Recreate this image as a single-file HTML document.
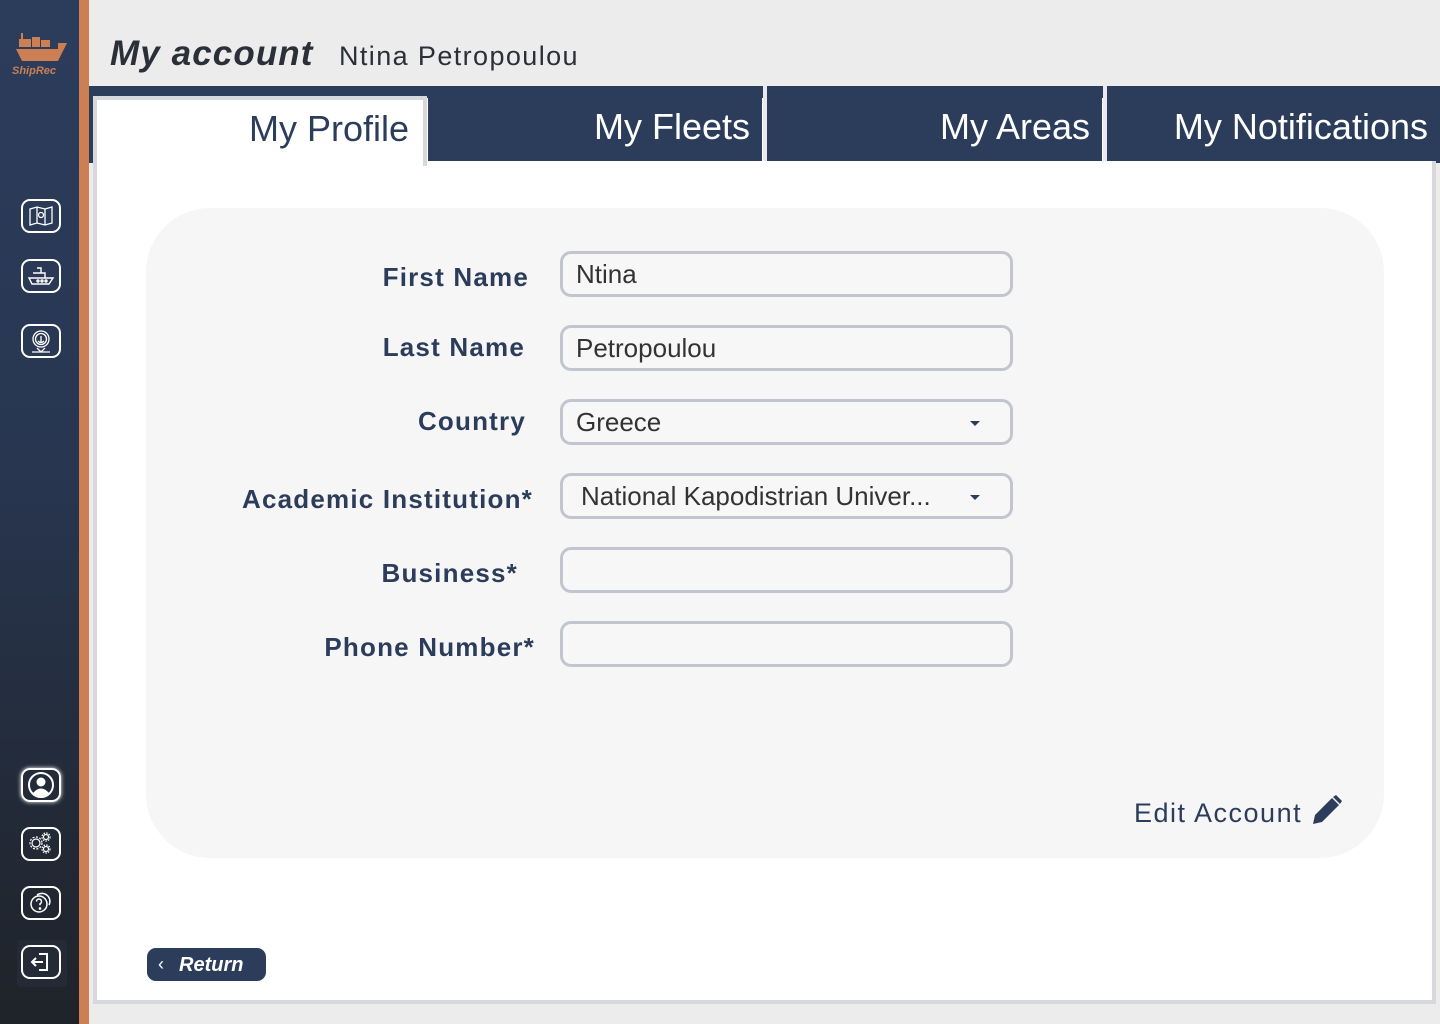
<!DOCTYPE html>
<html><head><meta charset="utf-8"><style>
*{margin:0;padding:0;box-sizing:border-box}
body{width:1440px;height:1024px;overflow:hidden;background:#ececec;font-family:"Liberation Sans",sans-serif;position:relative}
.side{position:absolute;left:0;top:0;width:79px;height:1024px;background:linear-gradient(#2c3d5c 0%,#283650 45%,#1f2329 100%)}
.strip{position:absolute;left:79px;top:0;width:10px;height:1024px;background:#cb7f52}
.ico{position:absolute;left:21px;width:40px;height:34px;border:2.5px solid #fff;border-radius:9px;display:flex;align-items:center;justify-content:center}
.title{position:absolute;left:110px;top:34px;font-size:35px;font-weight:bold;font-style:italic;color:#2b2f38;letter-spacing:1.1px}
.name{position:absolute;left:339px;top:41px;font-size:27px;color:#2b2f38;letter-spacing:1.4px}
.bar{position:absolute;left:89px;top:86px;width:1351px;height:77px;background:#2c3d5c}
.panel{position:absolute;left:93px;top:98px;width:1343px;height:906px;background:#fff;border:4px solid #d6d8de;border-top:none}
.tab{position:absolute;top:86px;height:75px;background:#2c3d5c;color:#fff;font-size:36px;text-align:right;padding-right:12px;line-height:82px}
.tab.act{top:96px;left:93px;width:334px;height:70px;background:#fff;color:#2c3d5c;border:4px solid #d6d8de;border-bottom:none;line-height:58px;padding-right:14px}
.sep{position:absolute;top:86px;width:4px;height:75px;background:#e8e8ee}
.card{position:absolute;left:146px;top:208px;width:1238px;height:650px;background:#f6f6f6;border-radius:64px}
.lbl{position:absolute;font-size:26px;color:#2c3d5c;font-weight:bold;letter-spacing:1.2px}
.inp{position:absolute;left:560px;width:453px;height:46px;border:3px solid #c2c5cd;border-radius:11px;font-size:26px;color:#333;padding-left:13px;line-height:40px;background:#f7f7f7}
.caret{position:absolute;right:30px;top:19px;width:0;height:0;border-left:5px solid transparent;border-right:5px solid transparent;border-top:5px solid #2c3d5c}
.edit{position:absolute;left:1134px;top:798px;font-size:27px;color:#2c3d5c;letter-spacing:1.5px}
.ret{position:absolute;left:147px;top:948px;width:119px;height:33px;background:#2c3d5c;border-radius:9px;color:#fff;font-size:20px;font-weight:bold;font-style:italic;line-height:34px;padding-left:32px}
</style></head><body>
<div class="side">
  <svg style="position:absolute;left:12px;top:28px" width="58" height="50" viewBox="0 0 58 50">
    <g fill="#cb7f52">
      <rect x="9" y="5" width="2" height="6"/><rect x="7" y="11" width="12" height="8"/><rect x="20" y="9" width="8" height="10"/><rect x="29" y="12" width="9" height="7"/>
      <path d="M4 21h48l-6 12H10z"/><path d="M46 15h9l-3 6h-6z"/>
      <text x="0" y="46" font-family="Liberation Sans" font-weight="bold" font-style="italic" font-size="11">ShipRec</text>
    </g>
  </svg>
  <div class="ico" style="top:199px"><svg width="26" height="22" viewBox="0 0 26 22" fill="none" stroke="#fff" stroke-width="1.3"><path d="M2 4l7-2 8 2 7-2v16l-7 2-8-2-7 2z M9 2v16 M17 4v16"/><circle cx="13" cy="10" r="2.5"/></svg></div>
  <div class="ico" style="top:259px"><svg width="28" height="22" viewBox="0 0 28 22" fill="none" stroke="#fff" stroke-width="1.4"><path d="M10 3h4v5 M6 8h12v5 M2 13h24l-4 6H5z"/><circle cx="11" cy="16" r="1"/><circle cx="15" cy="16" r="1"/><circle cx="19" cy="16" r="1"/></svg></div>
  <div class="ico" style="top:324px"><svg width="24" height="26" viewBox="0 0 24 26" fill="none" stroke="#fff" stroke-width="1.3"><circle cx="12" cy="11" r="8"/><circle cx="12" cy="11" r="5.5"/><path d="M12 8v7 M9 13q3 3 6 0 M8 20l4 4 4-4 M3 24h18"/></svg></div>
  <div class="ico" style="top:768px;box-shadow:0 0 4px #fff"><svg width="28" height="28" viewBox="0 0 28 28"><circle cx="14" cy="14" r="12" fill="none" stroke="#fff" stroke-width="2"/><circle cx="14" cy="11" r="4.5" fill="#fff"/><path d="M6 22q8-9 16 0q-8 6-16 0z" fill="#fff"/></svg></div>
  <div class="ico" style="top:827px"><svg width="28" height="26" viewBox="0 0 28 26" fill="none" stroke="#fff" stroke-width="1.2"><circle cx="9" cy="12" r="4"/><circle cx="9" cy="12" r="6" stroke-dasharray="2 1.5"/><circle cx="19" cy="6" r="2.5"/><circle cx="19" cy="6" r="4" stroke-dasharray="1.5 1.2"/><circle cx="19" cy="18" r="2.5"/><circle cx="19" cy="18" r="4" stroke-dasharray="1.5 1.2"/></svg></div>
  <div class="ico" style="top:886px"><svg width="28" height="26" viewBox="0 0 28 26" fill="none" stroke="#fff" stroke-width="1.5"><circle cx="12" cy="14" r="8"/><path d="M10 5a8 8 0 0 1 12 10"/><path d="M9.5 11.5a2.5 2.5 0 1 1 3.5 2.3v1.5"/><circle cx="13" cy="18.5" r=".6" fill="#fff"/></svg></div>
  <div style="position:absolute;left:17px;top:940px;width:50px;height:47px;background:#252b36;border-radius:4px"></div>
  <div class="ico" style="top:945px"><svg width="24" height="22" viewBox="0 0 24 22" fill="none" stroke="#fff" stroke-width="2"><path d="M10 3h8v16h-8 M14 11H3 M7 7l-4 4 4 4"/></svg></div>
</div>
<div class="strip"></div>
<div class="title">My account</div>
<div class="name">Ntina Petropoulou</div>
<div class="bar"></div>
<div class="panel"></div>
<div class="tab act">My Profile</div>
<div class="tab" style="left:428px;width:334px">My Fleets</div>
<div class="sep" style="left:763px"></div>
<div class="tab" style="left:767px;width:335px">My Areas</div>
<div class="sep" style="left:1103px"></div>
<div class="tab" style="left:1107px;width:333px">My Notifications</div>
<div class="card"></div>
<div class="lbl" style="right:911px;top:262px">First Name</div>
<div class="lbl" style="right:915px;top:332px">Last Name</div>
<div class="lbl" style="right:914px;top:406px">Country</div>
<div class="lbl" style="right:907px;top:484px">Academic Institution*</div>
<div class="lbl" style="right:922px;top:558px">Business*</div>
<div class="lbl" style="right:905px;top:632px">Phone Number*</div>
<div class="inp" style="top:251px">Ntina</div>
<div class="inp" style="top:325px">Petropoulou</div>
<div class="inp" style="top:399px">Greece<span class="caret"></span></div>
<div class="inp" style="top:473px;padding-left:18px">National Kapodistrian Univer...<span class="caret"></span></div>
<div class="inp" style="top:547px"></div>
<div class="inp" style="top:621px"></div>
<div class="edit">Edit Account</div>
<svg style="position:absolute;left:1311px;top:794px" width="32" height="32" viewBox="0 0 32 32"><path d="M2 30l2-9L21 4l7 7-17 17z" fill="#2c3d5c"/><path d="M22 3l3-2 6 6-2 3z" fill="#2c3d5c"/></svg>
<div class="ret"><span style="position:absolute;left:11px;top:-1px;font-style:normal;font-weight:normal;font-size:18px">‹</span>Return</div>
</body></html>
